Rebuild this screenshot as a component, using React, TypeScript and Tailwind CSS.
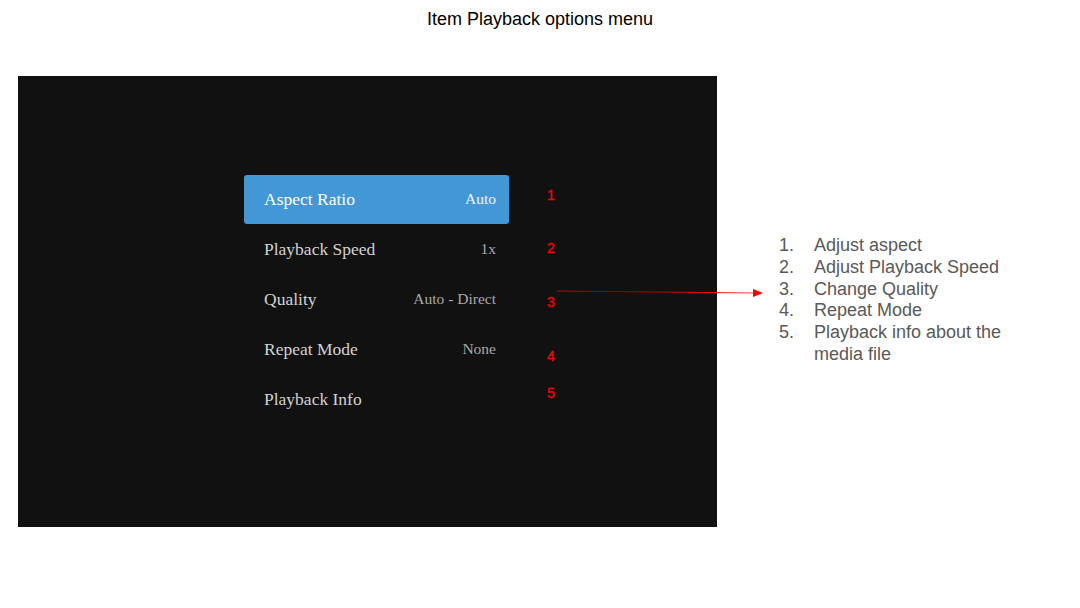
import React from "react";

const items = [
  { label: "Aspect Ratio", value: "Auto" },
  { label: "Playback Speed", value: "1x" },
  { label: "Quality", value: "Auto - Direct" },
  { label: "Repeat Mode", value: "None" },
  { label: "Playback Info", value: "" },
];

const notes = [
  { n: "1", top: 111 },
  { n: "2", top: 164 },
  { n: "3", top: 218 },
  { n: "4", top: 272 },
  { n: "5", top: 309 },
];

const list = [
  ["1.", "Adjust aspect"],
  ["2.", "Adjust Playback Speed"],
  ["3.", "Change Quality"],
  ["4.", "Repeat Mode"],
  ["5.", "Playback info about the media file"],
];

export default function App() {
  return (
    <div className="relative w-[1080px] h-[608px] bg-white overflow-hidden font-['Liberation_Sans',Arial,sans-serif]">
      <div className="pt-[9px] text-center text-[18px] leading-[20px] text-black">
        Item Playback options menu
      </div>
      <div className="flex mt-[47px]">
        <div className="relative ml-[18px] w-[699px] h-[451px] bg-[#111111] shrink-0">
          <div className="ml-[226px] mt-[99px] w-[265px] flex flex-col font-['Liberation_Serif','Times_New_Roman',serif]">
            {items.map((it, i) => (
              <div
                key={it.label}
                className={
                  i === 0
                    ? "flex items-center justify-between h-[49px] mb-[1px] pl-[20px] pr-[13px] rounded-[3px] bg-[#4297d6] text-white"
                    : "flex items-center justify-between h-[50px] pl-[20px] pr-[13px] text-[#d2d2d2]"
                }
              >
                <span className="text-[17.5px] leading-[20px] -mt-[2px]">{it.label}</span>
                <span
                  className={
                    i === 0
                      ? "text-[15.5px] leading-[20px] -mt-[2px] text-[#f0f4f8]"
                      : "text-[15.5px] leading-[20px] -mt-[2px] text-[#a8a8a8]"
                  }
                >
                  {it.value}
                </span>
              </div>
            ))}
          </div>
          {notes.map((n) => (
            <div
              key={n.n}
              className="absolute left-[529px] text-[14px] leading-[16px] text-[#ff0000] [-webkit-text-stroke:0.3px_#ff0000]"
              style={{ top: n.top }}
            >
              {n.n}
            </div>
          ))}
        </div>
        <div className="ml-[60px] mt-[159px] w-[240px] text-[18px] leading-[21.8px] text-[#595959]">
          {list.map(([num, text]) => (
            <div key={num} className="flex">
              <span className="w-[37px] shrink-0 pl-[2px]">{num}</span>
              <span>{text}</span>
            </div>
          ))}
        </div>
      </div>
      <svg className="absolute left-[555px] top-[285px]" width="215" height="14" viewBox="0 0 215 14">
        <defs>
          <linearGradient id="ag" x1="0" x2="1" y1="0" y2="0">
            <stop offset="0" stopColor="#cc0000" />
            <stop offset="0.3" stopColor="#880000" />
            <stop offset="0.75" stopColor="#ff0000" />
            <stop offset="1" stopColor="#ff4444" />
          </linearGradient>
        </defs>
        <line x1="2" y1="6" x2="200" y2="8" stroke="url(#ag)" strokeWidth="1.2" />
        <polygon points="198,4 208,8 198,12" fill="#ff0000" />
      </svg>
    </div>
  );
}
